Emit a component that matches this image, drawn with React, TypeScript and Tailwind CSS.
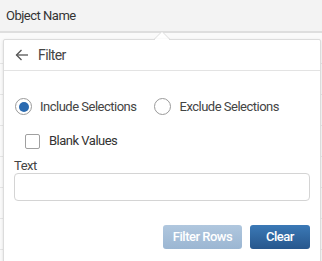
import React from "react";

export default function App() {
  const rows = [0, 1, 2, 3, 4, 5, 6, 7];
  return (
    <div
      className="relative w-[322px] h-[261px] overflow-hidden bg-white tracking-[-0.5px]"
      style={{ fontFamily: "Roboto, 'Liberation Sans', sans-serif" }}
    >
      <div className="h-[33px] bg-[#f3f3f3] border-b-2 border-[#dedede] flex items-center pl-[6px] text-[13px] text-[#333]">
        Object Name
      </div>
      <div className="flex flex-col">
        {rows.map((r) => (
          <div key={r} className="h-[31px] border-b border-[#e6e6e6] bg-[#fafafa]" />
        ))}
      </div>

      {/* caret */}
      <div className="absolute left-[154px] top-[31px] w-0 h-0 border-l-[8px] border-r-[8px] border-b-[8px] border-l-transparent border-r-transparent border-b-[#dcdcdc]" />
      <div className="absolute left-[155px] top-[32px] w-0 h-0 border-l-[7px] border-r-[7px] border-b-[7px] border-l-transparent border-r-transparent border-b-white" />

      {/* popover */}
      <div className="absolute left-[3px] top-[39px] w-[318px] h-[240px] bg-white border border-[#dcdcdc] rounded-[2px] shadow-[0_1px_3px_rgba(0,0,0,0.12)]">
        <div className="absolute left-[151px] -top-[1px] w-[14px] h-[2px] bg-white" />
        <div className="h-[31px] border-b border-[#e3e3e3] flex items-center pl-[11px] text-[#444]">
          <svg width="14" height="12" viewBox="0 0 14 12" fill="none" stroke="#555" strokeWidth="1.3">
            <path d="M13 6H1.5" />
            <path d="M6.5 1L1.5 6L6.5 11" />
          </svg>
          <span className="ml-[9px] text-[14px] tracking-[-0.6px]">Filter</span>
        </div>
        <div className="px-[10px] pt-[27px] flex flex-col">
          <div className="flex items-center text-[13px] text-[#444] h-[17px]">
            <div className="ml-[1px] w-[17px] h-[17px] rounded-full border border-[#9a9a9a] flex items-center justify-center">
              <div className="w-[10px] h-[10px] rounded-full bg-[#2a6ab0]" />
            </div>
            <span className="ml-[8px]">Include Selections</span>
            <div className="ml-[17px] w-[17px] h-[17px] rounded-full border border-[#9a9a9a]" />
            <span className="ml-[9px]">Exclude Selections</span>
          </div>
          <div className="flex items-center mt-[18px] h-[16px] text-[13px] text-[#333]">
            <div className="ml-[11px] w-[15px] h-[15px] rounded-[2px] border border-[#a0a0a0]" />
            <span className="ml-[9px]">Blank Values</span>
          </div>
          <div className="mt-[10px] text-[13px] text-[#444] leading-[13px]">Text</div>
          <div className="mt-[1px] h-[28px] border border-[#d4d4d4] rounded-[4px]" />
          <div className="mt-[24px] flex justify-end gap-[8px]">
            <div className="w-[79px] h-[24px] rounded-[3px] bg-gradient-to-b from-[#b0c7de] to-[#9bb6d2] text-white text-[13px] font-medium flex items-center justify-center">
              Filter Rows
            </div>
            <div className="w-[60px] h-[24px] rounded-[3px] bg-gradient-to-b from-[#3b79b6] to-[#27578d] text-white text-[13px] font-medium flex items-center justify-center">
              Clear
            </div>
          </div>
        </div>
      </div>
    </div>
  );
}
